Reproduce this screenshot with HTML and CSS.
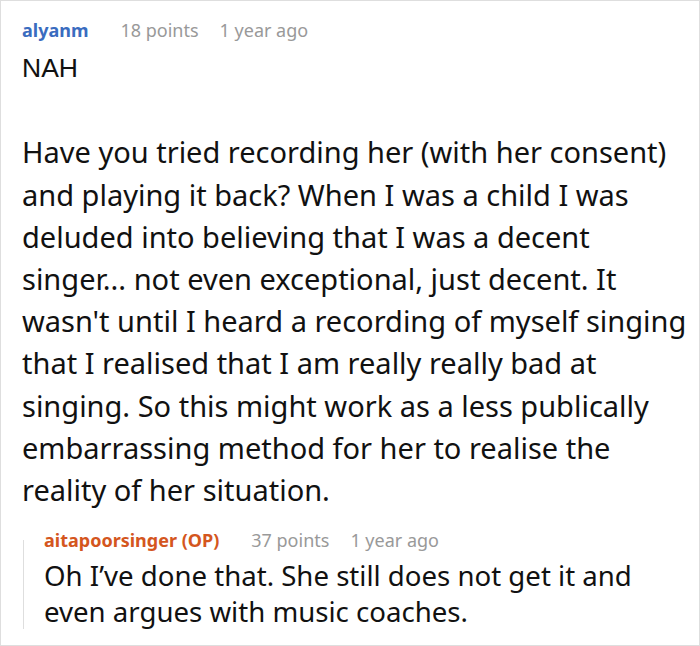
FILE: index.html
```html
<!DOCTYPE html>
<html>
<head>
<meta charset="utf-8">
<link rel="stylesheet" href="styles.css">
</head>
<body>
<div class="comment">
  <div class="meta">
    <span class="user">alyanm</span>
    <span class="points">18 points</span>
    <span class="time">1 year ago</span>
  </div>
  <div class="text"><span class="nah">NAH</span><br><br>Have you tried recording her (with her consent) and playing it back? When I was a child I was deluded into believing that I was a decent singer... not even exceptional, just decent. It wasn't until I heard a recording of myself singing that I realised that I am really really bad at singing. So this might work as a less publically embarrassing method for her to realise the reality of her situation.</div>
  <div class="reply">
    <div class="meta">
      <span class="user op">aitapoorsinger (OP)</span>
      <span class="points">37 points</span>
      <span class="time">1 year ago</span>
    </div>
    <div class="reply-text">Oh I’ve done that. She still does not get it and even argues with music coaches.</div>
  </div>
</div>
</body>
</html>
```

FILE: styles.css
```css
html, body {
  margin: 0;
  padding: 0;
  background: #fff;
}
.comment {
  box-sizing: border-box;
  width: 700px;
  height: 646px;
  border: 1px solid #dedede;
  padding: 17px 3px 0 21px;
  font-family: "Noto Sans", sans-serif;
  color: #111;
}
.meta {
  display: flex;
  font-size: 18px;
  line-height: 24px;
  height: 24px;
  white-space: nowrap;
}
.user {
  color: #3a6cbf;
  font-weight: bold;
  margin-right: 32px;
}
.user.op {
  color: #d4561e;
}
.points {
  color: #999;
  margin-right: 21px;
}
.time {
  color: #999;
}
.text {
  font-size: 29px;
  line-height: 42.2px;
  margin-top: 1px;
}
.nah {
  font-family: "Liberation Sans", Arial, sans-serif;
  font-size: 26.5px;
  vertical-align: -2px;
}
.reply {
  margin: 17px 0 0 1px;
  padding-left: 21px;
  background: linear-gradient(#dedede, #dedede) no-repeat 0 12px / 1px calc(100% - 12px);
}
.reply-text {
  font-size: 27.6px;
  line-height: 36px;
  margin-top: 5px;
}
```
